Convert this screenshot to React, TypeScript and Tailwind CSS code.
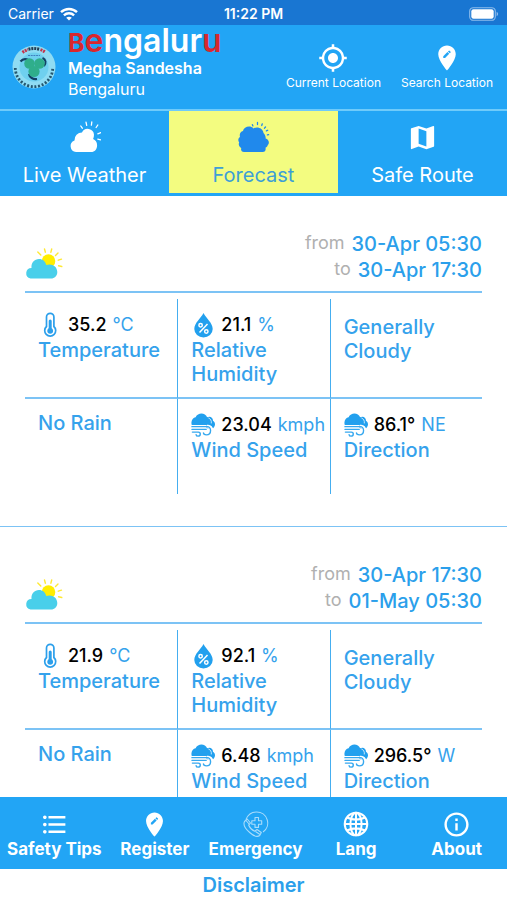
import { ReactNode } from "react";
import {
  MdEditLocation,
  MdFormatListBulleted,
  MdInfoOutline,
  MdMap,
  MdMyLocation,
} from "react-icons/md";
import clsx from "clsx";

type Forecast = {
  from: string;
  to: string;
  temperature: string;
  humidity: string;
  sky: string;
  rain: string;
  windSpeed: string;
  windAngle: string;
  windDirection: string;
};

const forecasts: Forecast[] = [
  {
    from: "30-Apr 05:30",
    to: "30-Apr 17:30",
    temperature: "35.2",
    humidity: "21.1",
    sky: "Generally Cloudy",
    rain: "No Rain",
    windSpeed: "23.04",
    windAngle: "86.1°",
    windDirection: "NE",
  },
  {
    from: "30-Apr 17:30",
    to: "01-May 05:30",
    temperature: "21.9",
    humidity: "92.1",
    sky: "Generally Cloudy",
    rain: "No Rain",
    windSpeed: "6.48",
    windAngle: "296.5°",
    windDirection: "W",
  },
];

const WifiIcon = () => (
  <svg viewBox="0 0 18 14" className="h-3.5 w-[18px]" fill="none" stroke="#fff" strokeWidth="2.4">
    <path d="M1 5.2C5.5.9 12.5.9 17 5.2" />
    <path d="M3.9 8.3c2.900-2.700 7.300-2.700 10.200 0" />
    <path d="M9 13.600 6.200 10.800c1.600-1.500 4-1.500 5.600 0z" fill="#fff" stroke="none" />
  </svg>
);

const BatteryIcon = () => (
  <svg viewBox="0 0 30 14" className="h-3.5 w-[30px]">
    <rect x=".7" y=".7" width="25.6" height="12.6" rx="3.6" fill="none" stroke="#8fbdec" strokeWidth="1.1" />
    <rect x="2.3" y="2.3" width="22.4" height="9.4" rx="2.2" fill="#fff" />
    <path d="M27.6 4.8c2 .8 2 3.6 0 4.4z" fill="#8fbdec" />
  </svg>
);

const Emblem = () => (
  <svg viewBox="0 0 44 44" className="size-11 shrink-0" aria-label="Megha Sandesha emblem">
    <circle cx="22" cy="22" r="21.5" fill="#8fdcf3" />
    <circle cx="22" cy="22" r="14.5" fill="#6fd0ef" />
    <path d="M16 10.500h12" stroke="#3f7fc0" strokeWidth="1.200" strokeDasharray="2 .7" />
    <path d="M8.500 16.500c2-2.500 5-3 8-1.500" fill="none" stroke="#123f63" strokeWidth="2.200" />
    <path d="M30.500 13c3.500 1.500 4 5 1.500 8" fill="none" stroke="#123f63" strokeWidth="2" />
    <path d="M17 29c.5 3.500 4 5.500 8 5" fill="none" stroke="#123f63" strokeWidth="2.200" />
    <circle cx="17.500" cy="18.500" r="5.300" fill="#2fae8b" />
    <circle cx="27.500" cy="18.500" r="5.300" fill="#2fae8b" />
    <circle cx="22" cy="26.500" r="5.600" fill="#2fae8b" />
    <path d="M10.500 7.500A18.500 18.500 0 0 1 16 4.500" fill="none" stroke="#c5324b" strokeWidth="3" strokeDasharray="2 .8" />
    <path d="M16.500 4.300A18.500 18.500 0 0 1 28 4.500" fill="none" stroke="#243b50" strokeWidth="3" strokeDasharray="2 .9" />
    <path d="M28.500 4.700A18.500 18.500 0 0 1 33 7" fill="none" stroke="#c5324b" strokeWidth="3" strokeDasharray="2 .8" />
    <path d="M3.300 23A18.700 18.700 0 0 0 40.700 23" fill="none" stroke="#24566f" strokeWidth="2.800" strokeDasharray="2 1.700" />
  </svg>
);

const LiveWeatherIcon = () => (
  <svg viewBox="0 0 32 32" className="size-8" fill="#fff">
    <path d="M7 31a6 6 0 0 1-1.500-11.600A7.500 7.500 0 0 1 13 11.500a6.300 6.300 0 0 1 12 2.200c0 1.600-.4 3-.9 4.300 2.300 1 4 3 4 6.200 0 4-2.400 6.800-6 6.800z" />
    <path
      d="m11.800 5 1.500 2.200M17 1.200l.7 3.200M22.800 1l-.4 3.200M28.800 4l-1.700 2.500M31.800 11.600l-3 1.200M31.600 18.800l-2.800-.7"
      stroke="#fff"
      strokeWidth="1.300"
      strokeLinecap="round"
    />
  </svg>
);

const ForecastIcon = () => (
  <svg viewBox="0 0 32 32" className="size-8" fill="#2089ec">
    <path d="M6 31c-2.500 0-3.500-2-2.700-4C1 25.800.2 23.500 1.200 21.500-.3 19.500.2 17 2 16c-.8-3 .5-5.500 3-6 .8-4.500 7.500-6 10.500-2.500 4-2.500 9.500 0 10 4.500 1.500 1.500 2.400 3.500 2.100 5.500 3 .4 4.400 4.500 2.200 6.600-.4 1.400-1.200 2.200-2.300 2.600.6 2.300-.5 4.300-2.700 4.300z" />
    <path
      d="m14.400 3.700.5 1.200M19.500 1.500v2M24.300 2.800l-.6 1.700M27.500 6l-1 1.200M29.700 9.200l-1.300.7M30.600 13.700l-1.200.2"
      stroke="#2089ec"
      strokeWidth="1.300"
      strokeLinecap="round"
    />
  </svg>
);

const PartlySunnyIcon = () => (
  <svg viewBox="0 0 38 31" className="h-[31px] w-[38px]">
    <circle cx="23.500" cy="13" r="6.800" fill="#ffee00" />
    <path
      d="m12.800 4 3 3M19.500 1l.9 3.200M26.700 1l-.8 3.200M33 5l-2.500 2.500M36.500 11.200l-3.200 1M36.800 18.500l-3.200-.7"
      stroke="#ffe933"
      strokeWidth="1.400"
      strokeLinecap="round"
    />
    <path d="M5.500 30.500a5.300 5.300 0 0 1 1-10.500C6 14.500 9.500 11 14 11c3.700 0 6.300 2.300 7.300 6 5-2 11 1 11 7 0 4-2.800 6.500-6.300 6.500z" fill="#49cfea" />
  </svg>
);

const ThermometerIcon = () => (
  <svg viewBox="0 0 24 26" className="h-[26px] w-6" fill="none" stroke="#2b9feb">
    <path d="M8.500 14.500V5a3.700 3.700 0 0 1 7.400 0v9.500a5.500 5.500 0 1 1-7.400 0z" strokeWidth="1.700" />
    <path d="M12.200 9v8" strokeWidth="3" strokeLinecap="round" />
    <circle cx="12.200" cy="18.800" r="2.900" fill="#2b9feb" stroke="none" />
  </svg>
);

const HumidityIcon = () => (
  <svg viewBox="0 0 24 26" className="h-[26px] w-6" fill="none">
    <path d="M12.500 1C15 6 21.700 11 21.700 17a9.200 8.500 0 0 1-18.400 0C3.300 11 10 6 12.500 1z" fill="#22a0ee" />
    <g stroke="#fff" strokeWidth="1.500">
      <path d="m8.500 20.500 8-8.500" />
      <circle cx="9.600" cy="13.300" r="1.700" />
      <circle cx="15.300" cy="19.500" r="1.700" />
    </g>
  </svg>
);

const WindIcon = () => (
  <svg viewBox="0 0 26 26" className="h-[26px] w-[26px]" fill="none">
    <path d="M17 5c4-2.500 7 .5 6.800 3.300 3 1.800 2.800 6 .2 8.200H17z" fill="#22a0ee" />
    <path d="M.8 13C-.5 8.500 2 5 5 4.500 7.500-.7 15.500-.7 17.600 5c2.900.4 4.600 3.800 3.400 8z" fill="#22a0ee" />
    <path d="M18.800 5.300c2.400 1 3.600 3 3.200 6" stroke="#fff" strokeWidth=".8" />
    <path d="M17.500 14.600c6.500-1.200 6.800 9.900-.8 9.700" stroke="#fff" strokeWidth="3.600" />
    <g stroke="#36a8ef" strokeWidth="1.500" strokeLinecap="round">
      <path d="M1 14.800h16M1 17.700h15.500" />
      <path d="M17 14.800c5.500-.8 5.800 8.900-.3 8.900-2 0-3.200-1-3.200-2.200" />
      <path d="M1.500 20.700H8c2.900 0 2.700 4.400-.3 4.400-1.300 0-2.100-.7-2.200-1.700" />
    </g>
  </svg>
);

const EmergencyIcon = () => (
  <svg viewBox="0 0 28 28" className="size-7" fill="none" stroke="#a9dcfb" strokeWidth="1.100" strokeLinejoin="round">
    <path d="M5 9.500C7 4.500 11 2 15.500 2a11 11 0 0 1 6.500 20" />
    <path d="M14 7.500h3.500v3.200h3.200v3.500h-3.200v3.200H14v-3.200h-3.200v-3.500H14z" />
    <path d="M3.500 11.500 6.200 9l3.300 4-1.800 2.200c1.200 2.800 3.200 4.800 6 6l2.300-1.700 4.300 3-1.600 3c-2.400 1.700-6.500.2-10-3C4 18.500 1.800 15 3.500 11.500z" />
    <path d="m5 10.500 3.500 4M14.500 21.500l4.500 3" />
  </svg>
);

const GlobeIcon = () => (
  <svg viewBox="0 0 28 28" className="size-7" fill="none" stroke="#fff" strokeWidth="2">
    <circle cx="14" cy="14" r="11.300" />
    <ellipse cx="14" cy="14" rx="5.600" ry="11.300" />
    <path d="M14 2.700v22.600M2.700 14h22.600M5 7.500c5.500 2.600 12.500 2.600 18 0M5 20.500c5.500-2.600 12.500-2.600 18 0" />
  </svg>
);

const Metric = ({
  icon,
  value,
  unit,
  label,
}: {
  icon: ReactNode;
  value: string;
  unit: string;
  label: string;
}) => (
  <>
    <div className="flex h-[27px] items-center gap-1.5 whitespace-nowrap text-lg font-medium text-black">
      <span className="flex w-6 shrink-0 justify-center">{icon}</span>
      {value}
      <span className="font-normal text-[#35a2ec]">{unit}</span>
    </div>
    <div>{label}</div>
  </>
);

const Cell = ({ className, children }: { className?: string; children: ReactNode }) => (
  <div className={clsx("border-b-[#7cc3f5] border-l-[#45aef0] pl-[13px]", className)}>{children}</div>
);

const Period = ({ label, value }: { label: string; value: string }) => (
  <div className="flex justify-end gap-[7px]">
    <span className="text-lg leading-6 font-normal text-[#b0b0b0]">{label}</span>
    {value}
  </div>
);

const ForecastCard = ({ data }: { data: Forecast }) => (
  <article className="border-b border-[#7cc3f5] px-[25px] pt-[35px] pb-8">
    <div className="flex items-end justify-between border-b-2 border-[#7cc3f5] pb-2">
      <div className="pb-1">
        <PartlySunnyIcon />
      </div>
      <div className="text-xl leading-[26px] font-medium text-[#2b9feb]">
        <Period label="from" value={data.from} />
        <Period label="to" value={data.to} />
      </div>
    </div>
    <div className="mt-1.5 grid grid-cols-3 grid-rows-[100px_95px] text-xl leading-6 font-medium text-[#35a2ec]">
      <Cell className="border-b-2 pt-3">
        <Metric icon={<ThermometerIcon />} value={data.temperature} unit="°C" label="Temperature" />
      </Cell>
      <Cell className="border-b-2 border-l pt-3">
        <Metric icon={<HumidityIcon />} value={data.humidity} unit="%" label="Relative Humidity" />
      </Cell>
      <Cell className="border-b-2 border-l pt-4 pr-9">{data.sky}</Cell>
      <Cell className="pt-3">{data.rain}</Cell>
      <Cell className="border-l pt-3">
        <Metric icon={<WindIcon />} value={data.windSpeed} unit="kmph" label="Wind Speed" />
      </Cell>
      <Cell className="border-l pt-3">
        <Metric icon={<WindIcon />} value={data.windAngle} unit={data.windDirection} label="Direction" />
      </Cell>
    </div>
  </article>
);

const tabs = [
  { label: "Live Weather", icon: <LiveWeatherIcon /> },
  { label: "Forecast", icon: <ForecastIcon />, active: true },
  { label: "Safe Route", icon: <MdMap size={31} /> },
];

const menu = [
  { label: "Safety Tips", icon: <MdFormatListBulleted size={29} /> },
  { label: "Register", icon: <MdEditLocation size={29} /> },
  { label: "Emergency", icon: <EmergencyIcon /> },
  { label: "Lang", icon: <GlobeIcon /> },
  { label: "About", icon: <MdInfoOutline size={29} /> },
];

export default function App() {
  return (
    <div className="flex h-screen flex-col bg-white font-['Inter',sans-serif]">
      <div className="grid h-[25px] shrink-0 grid-cols-3 items-center bg-[#1976d2] px-2 pt-0.5 text-sm text-white">
        <div className="flex items-center gap-1.5">
          Carrier <WifiIcon />
        </div>
        <div className="text-center font-semibold">11:22 PM</div>
        <div className="flex justify-end">
          <BatteryIcon />
        </div>
      </div>

      <header className="flex h-[86px] shrink-0 items-center justify-between border-b-2 border-[#6fcbfa] bg-[#22a5f5] pr-3.5 pl-3 text-white">
        <div className="flex items-center gap-3">
          <Emblem />
          <div className="pb-2 text-base leading-[21px]">
            <div className="text-[32px] leading-[30px] font-semibold" aria-label="Bengaluru">
              <span className="text-[25px] font-bold text-[#d9272e]">B</span>
              <span className="text-[#d9272e]">e</span>ngalur
              <span className="text-[#d9272e]">u</span>
            </div>
            <div className="font-semibold">Megha Sandesha</div>
            <div>Bengaluru</div>
          </div>
        </div>
        <div className="flex gap-5 text-xs">
          <button className="flex flex-col items-center gap-0.5">
            <MdMyLocation size={30} />
            Current Location
          </button>
          <button className="flex flex-col items-center gap-0.5">
            <MdEditLocation size={30} />
            Search Location
          </button>
        </div>
      </header>

      <nav className="grid h-[85px] shrink-0 grid-cols-3 bg-[#22a5f5] text-white">
        {tabs.map(({ label, icon, active }) => (
          <button
            key={label}
            className={clsx(
              "flex flex-col items-center pt-2.5 text-xl",
              active && "mb-[3px] bg-[#f3fc80] text-[#3e9fd6]"
            )}
          >
            <span className="flex h-8 items-center">{icon}</span>
            <span className="mt-2">{label}</span>
          </button>
        ))}
      </nav>

      <main className="min-h-0 flex-1 overflow-y-auto [scrollbar-width:none]">
        {forecasts.map((data) => (
          <ForecastCard key={data.from} data={data} />
        ))}
      </main>

      <nav className="grid h-[72px] shrink-0 grid-cols-5 bg-[#22a5f5] pt-3 pl-1 text-[17px] leading-5 font-bold text-white">
        {menu.map(({ label, icon }) => (
          <button key={label} className="flex flex-col items-center whitespace-nowrap">
            <span className="flex h-[30px] items-center">{icon}</span>
            {label}
          </button>
        ))}
      </nav>

      <a href="#disclaimer" className="h-[31px] shrink-0 text-center text-xl leading-8 font-semibold text-[#2b9feb]">
        Disclaimer
      </a>
    </div>
  );
}
